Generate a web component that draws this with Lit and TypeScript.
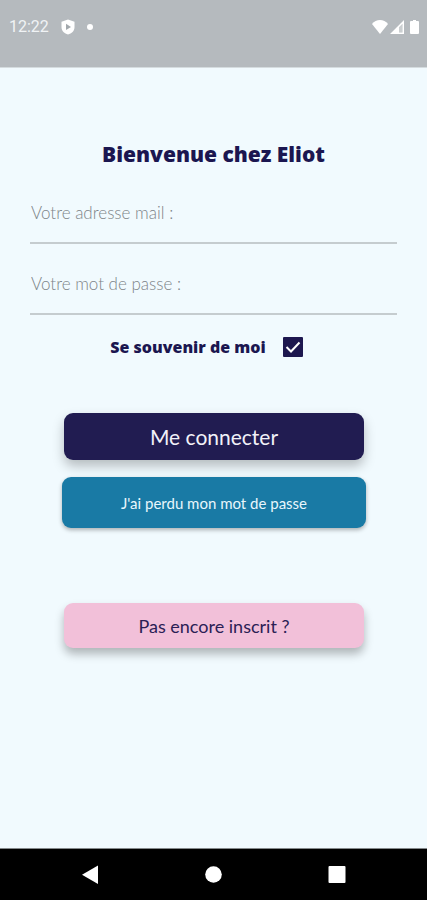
import { LitElement, html, css } from "lit";
import { customElement } from "lit/decorators.js";

@customElement("status-bar")
class StatusBar extends LitElement {
  static styles = css`
    :host {
      display: flex;
      align-items: flex-start;
      justify-content: space-between;
      box-sizing: border-box;
      height: 67px;
      padding: 17px 8px 0 9px;
      background: #b5babe;
      color: #fff;
      font: 16px/20px Roboto, sans-serif;
    }
    .group {
      display: flex;
      align-items: center;
      height: 20px;
    }
    .left {
      gap: 12px;
    }
    .right {
      gap: 2px;
    }
    .time {
      color: #f0f3f5;
    }
    .dot {
      width: 6px;
      height: 6px;
      border-radius: 50%;
      background: #fff;
    }
    .battery {
      margin-left: 4px;
    }
    svg {
      display: block;
    }
  `;

  render() {
    return html`
      <div class="group left">
        <span class="time">12:22</span>
        <svg width="14" height="16" viewBox="0 0 14 16" aria-hidden="true">
          <path fill="#fff" d="M7 .5 13.5 2.800V8c0 4-3 6.600-6.500 7.500C3.500 14.600.500 12 .500 8V2.800Z" />
          <path fill="#a3a9ad" d="M5 4.800 10 8 5 11Z" />
        </svg>
        <span class="dot"></span>
      </div>
      <div class="group right">
        <svg width="16" height="14" viewBox="0 0 16 14" aria-hidden="true">
          <path fill="#fff" d="M8 14 0 4C2 1.500 5 0 8 0s6 1.500 8 4Z" />
        </svg>
        <svg width="14" height="14" viewBox="0 0 14 14" aria-hidden="true">
          <path fill="#fff" fill-rule="evenodd" d="M14 0V14H0ZM9 7.200V12.500H12.500V3.700Z" />
          <path fill="#fff" opacity=".3" d="M9 7.200V12.500H12.500V3.700Z" />
        </svg>
        <svg class="battery" width="9" height="14" viewBox="0 0 9 14" aria-hidden="true">
          <path fill="#fff" d="M3 0h3v1h2q1 0 1 1V13q0 1-1 1H1q-1 0-1-1V2q0-1 1-1h2Z" />
        </svg>
      </div>
    `;
  }
}

@customElement("login-form")
class LoginForm extends LitElement {
  static styles = css`
    :host {
      display: block;
      padding: 70px 30px 24px;
      font-family: Lato, sans-serif;
      color: #1b1650;
    }
    form {
      display: flex;
      flex-direction: column;
    }
    h1 {
      margin: 0 0 24px;
      font: 900 21px/32px "Noto Sans", sans-serif;
      text-align: center;
    }
    .field {
      box-sizing: border-box;
      width: 100%;
      height: 50px;
      padding: 0 0 12px 1px;
      border: 0;
      border-bottom: 2px solid #c5cccf;
      border-radius: 0;
      outline: none;
      background: transparent;
      color: #1b1650;
      font: 300 17px/24px Lato, sans-serif;
    }
    .field::placeholder {
      color: #7d8488;
      opacity: 1;
    }
    .field + .field {
      margin-top: 21px;
    }
    .remember {
      display: flex;
      align-items: center;
      justify-content: center;
      gap: 17px;
      margin: 22px 0 56px;
      padding-right: 14px;
      font: 900 16px/20px "Noto Sans", sans-serif;
    }
    .check {
      display: grid;
      width: 20px;
      height: 20px;
    }
    .check > * {
      grid-area: 1 / 1;
    }
    .check input {
      appearance: none;
      width: 20px;
      height: 20px;
      margin: 0;
      border: 2px solid #1d174f;
      border-radius: 1px;
    }
    .check input:checked {
      background: #1d174f;
    }
    .check svg {
      visibility: hidden;
      pointer-events: none;
    }
    .check input:checked + svg {
      visibility: visible;
    }
    .actions {
      display: flex;
      flex-direction: column;
      align-items: center;
      padding-left: 1px;
    }
    button {
      border: 0;
      padding: 0;
      border-radius: 9px;
      font-family: Lato, sans-serif;
      cursor: pointer;
    }
    .connect {
      width: 82%;
      height: 47px;
      background: #211c51;
      color: #f1f1f8;
      font-size: 21px;
      box-shadow: 0 6px 12px rgba(0, 0, 0, 0.25);
    }
    .lost {
      width: 83%;
      height: 51px;
      margin-top: 17px;
      background: #197aa5;
      color: #e8f6fc;
      font-size: 15px;
      box-shadow: 0 2px 4px rgba(0, 0, 0, 0.3);
    }
    .signup {
      width: 82%;
      height: 45px;
      margin-top: 75px;
      background: #f2c0d9;
      color: #2b2055;
      font-size: 18px;
      box-shadow: 0 6px 10px rgba(0, 0, 0, 0.28);
    }
  `;

  render() {
    return html`
      <form @submit=${(e: Event) => e.preventDefault()}>
        <h1>Bienvenue chez Eliot</h1>
        <input class="field" type="email" aria-label="Votre adresse mail" placeholder="Votre adresse mail :" />
        <input class="field" type="password" aria-label="Votre mot de passe" placeholder="Votre mot de passe :" />
        <label class="remember">
          Se souvenir de moi
          <span class="check">
            <input type="checkbox" checked />
            <svg width="20" height="20" viewBox="0 0 20 20" aria-hidden="true">
              <path d="M3.500 10 8 14.500 16.500 5.500" fill="none" stroke="#fff" stroke-width="2" />
            </svg>
          </span>
        </label>
        <div class="actions">
          <button class="connect" type="submit">Me connecter</button>
          <button class="lost" type="button">J'ai perdu mon mot de passe</button>
          <button class="signup" type="button">Pas encore inscrit ?</button>
        </div>
      </form>
    `;
  }
}

@customElement("nav-bar")
class NavBar extends LitElement {
  static styles = css`
    :host {
      display: flex;
      justify-content: space-around;
      align-items: center;
      box-sizing: border-box;
      height: 52px;
      padding: 0 28px;
      border-top: 1px solid #85898b;
      background: #000;
    }
    button {
      display: block;
      padding: 0;
      border: 0;
      background: none;
      cursor: pointer;
    }
    svg {
      display: block;
      fill: #fff;
    }
  `;

  render() {
    return html`
      <button aria-label="Retour">
        <svg width="24" height="24" viewBox="0 0 24 24"><path d="M20 2.500V21L4 11.700Z" /></svg>
      </button>
      <button aria-label="Accueil">
        <svg width="24" height="24" viewBox="0 0 24 24"><circle cx="12.500" cy="11.500" r="8.300" /></svg>
      </button>
      <button aria-label="Applications">
        <svg width="24" height="24" viewBox="0 0 24 24"><rect x="3.500" y="3" width="17" height="17" rx="1" /></svg>
      </button>
    `;
  }
}

@customElement("app-root")
class AppRoot extends LitElement {
  static styles = css`
    :host {
      display: flex;
      flex-direction: column;
      min-height: 100vh;
      background: #f1fafe;
    }
    main {
      flex: 1;
      border-top: 1px solid #d5dcdf;
    }
  `;

  render() {
    return html`
      <status-bar></status-bar>
      <main><login-form></login-form></main>
      <nav-bar></nav-bar>
    `;
  }
}
